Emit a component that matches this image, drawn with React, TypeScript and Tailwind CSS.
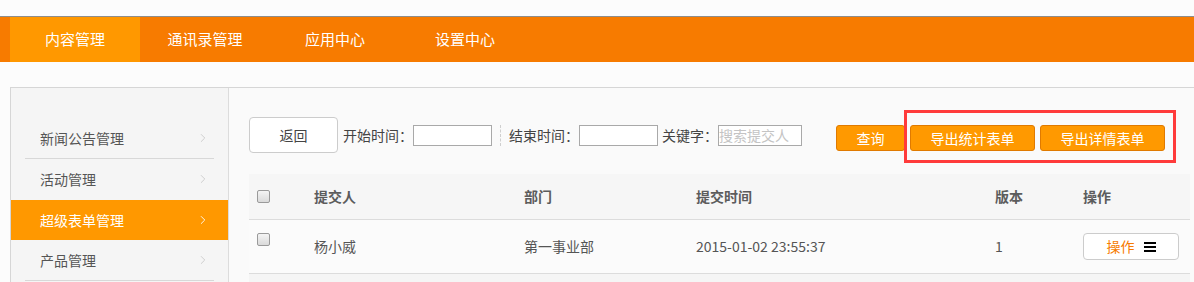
import { ChevronRight } from "lucide-react";

const tabs = ["内容管理", "通讯录管理", "应用中心", "设置中心"];
const menu = ["新闻公告管理", "活动管理", "超级表单管理", "产品管理"];

function Check() {
  return (
    <span className="inline-block w-[13px] h-[13px] rounded-[2px] border border-[#9a9a9a] bg-gradient-to-b from-[#f4f4f4] to-[#dadada]" />
  );
}

function OrangeButton({ label, width }: { label: string; width: string }) {
  return (
    <button
      className={`${width} h-[26px] rounded-[3px] border border-[#e07a00] bg-[#ff9900] text-[14px] text-white`}
    >
      {label}
    </button>
  );
}

export default function App() {
  return (
    <div
      className="w-[1194px] h-[282px] overflow-hidden bg-[#fcfcfc] text-[14px] text-[#555]"
      style={{ fontFamily: '"Noto Sans CJK SC", "Noto Sans", sans-serif' }}
    >
      <div className="h-[16px]" />
      {/* top nav */}
      <nav className="h-[46px] border-t border-[#8d8d8d] bg-[#f77b00] pl-[10px] flex">
        {tabs.map((t, i) => (
          <div
            key={t}
            className={`w-[130px] flex items-center justify-center text-[15px] text-white ${
              i === 0 ? "bg-[#ff9800]" : ""
            }`}
          >
            {t}
          </div>
        ))}
      </nav>

      <div className="h-[25px]" />

      <div className="ml-[10px] flex border-t border-l border-[#d6d6d6] h-[200px]">
        {/* sidebar */}
        <aside className="w-[218px] shrink-0 bg-[#f5f5f5] border-r border-[#dcdcdc] pt-[30px]">
          {menu.map((m, i) => {
            const active = i === 2;
            return (
              <div key={m} className={active ? "bg-[#ff9800]" : ""}>
                <div
                  className={`h-[40px] flex items-center justify-between pl-[29px] pr-[18px] ${
                    active ? "text-white" : "text-[#555]"
                  }`}
                >
                  <span>{m}</span>
                  <ChevronRight
                    className={`w-[14px] h-[14px] ${active ? "text-white" : "text-[#c8c8c8]"}`}
                    strokeWidth={1.5}
                  />
                </div>
                {!active && i !== 1 && <div className="mx-[14px] h-px bg-[#d8d8d8]" />}
                {i === 1 && <div className="h-px" />}
              </div>
            );
          })}
        </aside>

        {/* main */}
        <main className="flex-1 bg-[#fafafa] pl-[20px] pr-[4px] pt-[29px]">
          <div className="flex items-start h-[36px]">
            <button className="w-[89px] h-[36px] rounded-[4px] border border-[#cccccc] bg-white text-[14px] text-[#444]">
              返回
            </button>
            <div className="flex items-center h-[36px] ml-[5px] text-[#444]">
              <span>开始时间：</span>
              <span className="w-[79px] h-[21px] border border-[#a9a9a9] bg-white" />
              <span className="mx-[8px] h-[21px] border-l border-dashed border-[#cfcfcf]" />
              <span>结束时间：</span>
              <span className="w-[79px] h-[21px] border border-[#a9a9a9] bg-white" />
              <span className="ml-[4px]">关键字：</span>
              <span className="w-[84px] h-[21px] border border-[#a9a9a9] bg-white flex items-center text-[14px] text-[#c4c4c4] leading-none overflow-hidden whitespace-nowrap">
                搜索提交人
              </span>
            </div>
            <div className="ml-auto mr-[25px] mt-[8px] flex gap-[5px] relative">
              <OrangeButton label="查询" width="w-[69px]" />
              <OrangeButton label="导出统计表单" width="w-[125px]" />
              <OrangeButton label="导出详情表单" width="w-[125px]" />
              <div className="absolute left-[68px] top-[-15px] w-[272px] h-[53px] border-[3px] border-[#ff3b3b] pointer-events-none" />
            </div>
          </div>

          {/* table */}
          <div className="mt-[21px]">
            <div className="h-[46px] bg-[#f6f6f6] border-b border-[#dcdcdc] flex items-center font-bold text-[#5c5c5c]">
              <div className="w-[65px] pl-[8px] flex items-center">
                <Check />
              </div>
              <div className="w-[210px]">提交人</div>
              <div className="w-[172px]">部门</div>
              <div className="w-[299px]">提交时间</div>
              <div className="w-[88px]">版本</div>
              <div>操作</div>
            </div>
            <div className="h-[54px] bg-[#fbfbfb] border-b border-[#dcdcdc] flex items-center text-[#555]">
              <div className="w-[65px] pl-[8px] flex items-start self-start pt-[13px]">
                <Check />
              </div>
              <div className="w-[210px]">杨小威</div>
              <div className="w-[172px]">第一事业部</div>
              <div className="w-[299px]">2015-01-02 23:55:37</div>
              <div className="w-[88px]">1</div>
              <button className="w-[96px] h-[27px] rounded-[4px] border border-[#cccccc] bg-white flex items-center justify-center gap-[9px]">
                <span className="text-[#f77b00]">操作</span>
                <span className="flex flex-col gap-[2px]">
                  <span className="block w-[12px] h-[2px] bg-black" />
                  <span className="block w-[12px] h-[2px] bg-black" />
                  <span className="block w-[12px] h-[2px] bg-black" />
                </span>
              </button>
            </div>
            <div className="h-[10px] bg-[#f5f5f5]" />
          </div>
        </main>
      </div>
    </div>
  );
}
